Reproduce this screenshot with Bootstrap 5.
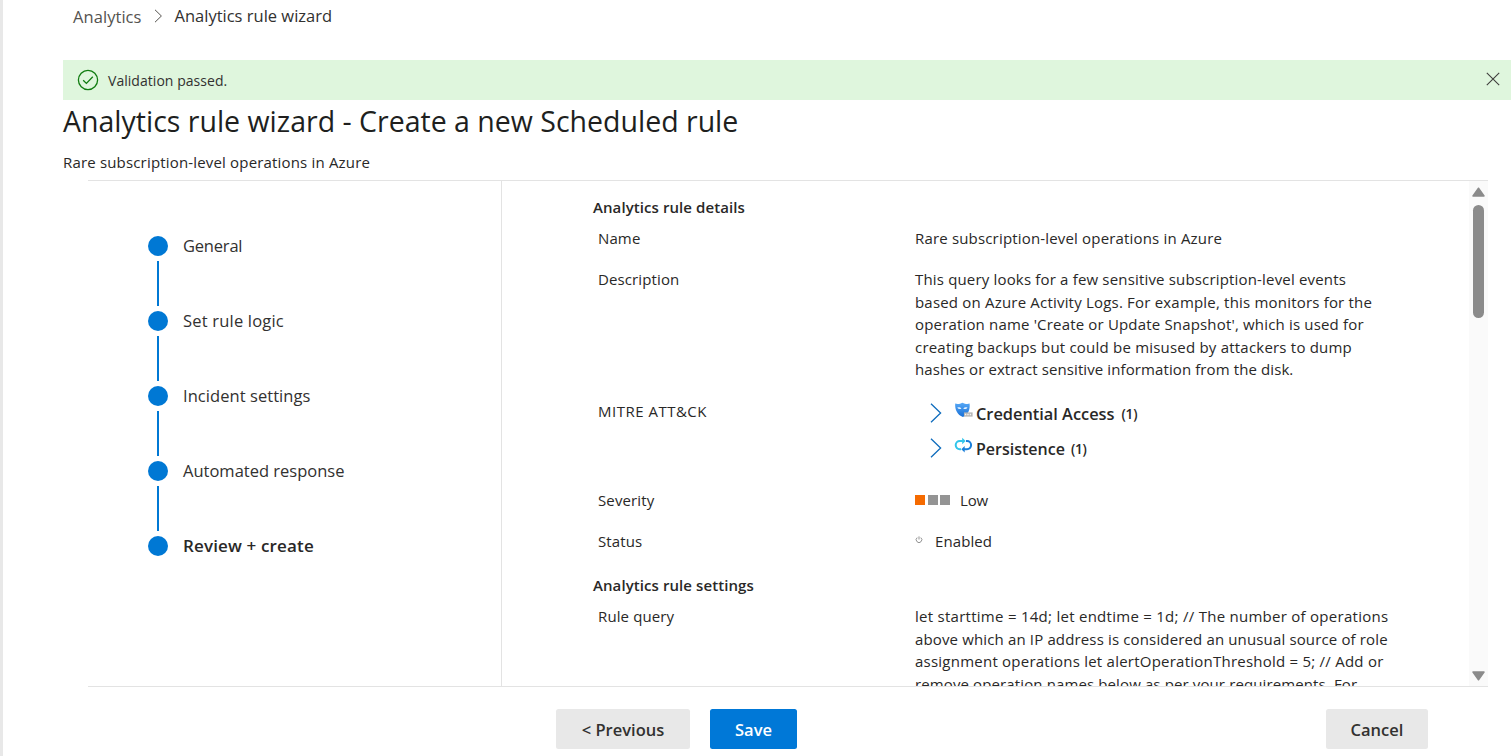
<!DOCTYPE html>
<html lang="en">
<head>
<meta charset="utf-8">
<meta name="viewport" content="width=device-width, initial-scale=1">
<title>Analytics rule wizard</title>
<link href="https://cdn.jsdelivr.net/npm/bootstrap@5.3.0/dist/css/bootstrap.min.css" rel="stylesheet">
<style>
  body { font-family: "Open Sans", "Noto Sans", sans-serif; font-size: 15px; line-height: 22.5px; color: #292827; background: #fff; }
  svg { display: block; flex: none; }
  .page { height: 756px; border-left: 3px solid #e8e8e8; padding-left: 60px; }
  .crumbs { height: 60px; padding: 6px 0 0 10px; font-size: 16.5px; color: #323130; }
  .crumbs .parent { color: #55534f; letter-spacing: .06px; }
  .banner { height: 40px; background: #dff6dd; padding: 0 11px 0 14px; }
  .banner-text { font-size: 14px; letter-spacing: .04px; color: #323130; padding-top: 2px; }
  .title { font-size: 28.5px; line-height: 40px; height: 50px; padding-top: 1px; color: #201f1e; }
  .tracked { letter-spacing: .172px; }
  .subtitle { height: 30px; padding-top: 1px; }
  .frame { height: 507px; margin: 0 23px 0 25px; border-top: 1px solid #e3e3e3; border-bottom: 1px solid #e3e3e3; }
  .steps { width: 414px; border-right: 1px solid #e3e3e3; padding: 55px 0 0 60px; font-size: 16.5px; color: #323130; }
  .step { height: 20px; gap: 15px; }
  .dot { width: 20px; height: 20px; border-radius: 50%; background: #0078d4; }
  .link-bar { width: 2px; height: 45px; margin: 5px 0 5px 9px; background: #0078d4; }
  .current { font-size: 17px; font-weight: 600; letter-spacing: .15px; color: #292827; }
  .details { padding: 15px 0 0 91px; }
  .section-title { font-size: 15px; line-height: 22.5px; font-weight: 600; letter-spacing: .08px; margin-bottom: 8.5px; }
  .field { padding-left: 5px; margin-bottom: 18.5px; }
  .field-name { width: 317px; flex: none; letter-spacing: .12px; }
  .tactic { height: 35px; padding-left: 14.5px; font-weight: 600; font-size: 16.35px; }
  .tactic .chev { margin-top: -2px; }
  .tactic-icon { margin: -8px 3px 0 12.5px; }
  .tactic .count { font-size: 13.6px; letter-spacing: -.2px; margin-left: 7px; }
  .sev { width: 10px; height: 10px; background: #949494; }
  .sev.on { background: #f56a00; }
  .track { width: 19px; background: #fafafa; padding: 6px 0 5px; }
  .thumb { width: 11px; height: 113px; border-radius: 6px; background: #8b8b8b; margin-top: 8px; }
  .actions { margin: 22px 83px 0 493px; }
  .actions .btn { height: 40px; border: 0; border-radius: 2.5px; font-size: 16.5px; font-weight: 600; padding: 2px 0 0; background: #e8e8e8; color: #323130; }
  .actions .btn-save { background: #0078d7; color: #fff; }
</style>
</head>
<body class="overflow-hidden">
<div class="page d-flex flex-column">
  <nav class="crumbs d-flex align-items-start" aria-label="breadcrumb">
    <span class="parent">Analytics</span>
    <svg width="10" height="14" viewBox="0 0 10 14" style="margin:3px 11px 0 12px" fill="none" stroke="#55534f"><path d="M1 .8 7.4 7 1 13.2"/></svg>
    <span style="margin-top:-1px">Analytics rule wizard</span>
  </nav>

  <div class="banner d-flex align-items-center">
    <svg width="22" height="22" viewBox="0 0 22 22" fill="none" stroke="#107c10" stroke-width="1.3"><circle cx="11" cy="11" r="9.6"/><path d="m6.2 11.2 3.2 3.2 6.4-6.6"/></svg>
    <span class="banner-text" style="margin-left:9px">Validation passed.</span>
    <svg class="ms-auto" width="14" height="14" viewBox="0 0 14 14" style="margin-top:-3px" fill="none" stroke="#403f3d" stroke-width="1.1"><path d="m.8.8 12.4 12.4M13.2.8.8 13.2"/></svg>
  </div>

  <h1 class="title fw-normal m-0">Analytics rule wizard - Create a new Scheduled rule</h1>
  <div class="subtitle tracked">Rare subscription-level operations in Azure</div>

  <main class="frame d-flex flex-shrink-0">
    <div class="steps flex-shrink-0">
      <div class="step d-flex align-items-center"><span class="dot"></span><span style="letter-spacing:-.2px">General</span></div>
      <div class="link-bar"></div>
      <div class="step d-flex align-items-center"><span class="dot"></span><span style="letter-spacing:.2px">Set rule logic</span></div>
      <div class="link-bar"></div>
      <div class="step d-flex align-items-center"><span class="dot"></span><span style="letter-spacing:.06px">Incident settings</span></div>
      <div class="link-bar"></div>
      <div class="step d-flex align-items-center"><span class="dot"></span><span>Automated response</span></div>
      <div class="link-bar"></div>
      <div class="step d-flex align-items-center"><span class="dot"></span><span class="current">Review + create</span></div>
    </div>

    <section class="details flex-grow-1 overflow-hidden text-nowrap">
      <h2 class="section-title">Analytics rule details</h2>
      <div class="field d-flex"><div class="field-name">Name</div><div class="tracked">Rare subscription-level operations in Azure</div></div>
      <div class="field d-flex" style="margin-bottom:19.5px"><div class="field-name">Description</div>
        <div class="tracked">This query looks for a few sensitive subscription-level events<br><span style="letter-spacing:.195px">based on Azure Activity Logs. For example, this monitors for the</span><br>operation name 'Create or Update Snapshot', which is used for<br><span style="letter-spacing:.21px">creating backups but could be misused by attackers to dump</span><br><span style="letter-spacing:.1px">hashes or extract sensitive information from the disk.</span></div></div>
      <div class="field d-flex"><div class="field-name" style="letter-spacing:.5px">MITRE ATT&amp;CK</div>
        <div style="margin:-3.5px 0 4px">
          <div class="tactic d-flex align-items-center">
            <svg class="chev" width="12" height="20" viewBox="0 0 12 20" fill="none" stroke="#0f6cbd" stroke-width="1.3"><path d="m1 .8 9.6 9.2L1 19.2"/></svg>
            <svg class="tactic-icon" width="19" height="18" viewBox="0 0 19 18">
              <defs><linearGradient id="mask" x2="0" y2="1"><stop stop-color="#57a8f6"/><stop offset="1" stop-color="#176fd6"/></linearGradient></defs>
              <path fill="url(#mask)" d="M1.2 2.6C4 3.5 6.1 2.7 8.4 1.7c2.5 1 4.6 1.8 7.2.9.7 5.8-1.4 11.4-6.7 13.5C3.5 14 .7 9 1.2 2.6Z"/>
              <path fill="#e4f2ff" d="M3.3 6.5c1.7-.5 3.2-.2 4.1 1.2-1.6.7-3.2.4-4.1-1.2Zm6 1.2c.9-1.4 2.5-1.7 4.2-1.2-.9 1.7-2.5 1.9-4.2 1.2Z"/>
              <path fill="#b4b4b4" d="M10 11.4h8.6v4.2H10z"/><path stroke="#f4f4f4" stroke-width="1.3" stroke-dasharray="1.4 1" d="M10.9 13.5h7"/>
            </svg>
            <span>Credential Access</span><span class="count">(1)</span>
          </div>
          <div class="tactic d-flex align-items-center">
            <svg class="chev" width="12" height="20" viewBox="0 0 12 20" fill="none" stroke="#0f6cbd" stroke-width="1.3"><path d="m1 .8 9.6 9.2L1 19.2"/></svg>
            <svg class="tactic-icon" width="19" height="16" viewBox="0 0 19 16" fill="none" stroke-width="2">
              <path stroke="#32c5ea" d="M7 12.2H5.8a4.1 4.1 0 0 1 0-8.2h3"/><path fill="#32c5ea" d="M8.2.8 11.6 4 8.2 7.2Z"/>
              <path stroke="#1b7fda" d="M12 4h1a4.1 4.1 0 0 1 0 8.2h-3"/><path fill="#1b7fda" d="M10.7 9 7.3 12.2l3.4 3.2Z"/>
            </svg>
            <span style="font-size:16px">Persistence</span><span class="count" style="margin-left:6px">(1)</span>
          </div>
        </div></div>
      <div class="field d-flex"><div class="field-name">Severity</div>
        <div class="d-flex align-items-center"><span class="sev on"></span><span class="sev" style="margin:0 2.5px"></span><span class="sev"></span><span style="margin-left:10px;letter-spacing:-.2px">Low</span></div></div>
      <div class="field d-flex" style="margin-bottom:21.5px"><div class="field-name">Status</div>
        <div class="d-flex align-items-center">
          <svg width="8" height="8" viewBox="0 0 8 8" style="margin-top:-2px" fill="none" stroke="#929292"><path d="M2.2 1.6a2.8 2.8 0 1 0 3.6 0M4 .4v3.1"/></svg>
          <span style="margin-left:12px;letter-spacing:.1px">Enabled</span></div></div>
      <h2 class="section-title">Analytics rule settings</h2>
      <div class="field d-flex"><div class="field-name">Rule query</div>
        <div class="tracked"><span style="letter-spacing:.27px">let starttime = 14d; let endtime = 1d; // The number of operations</span><br><span style="letter-spacing:.145px">above which an IP address is considered an unusual source of role</span><br><span style="letter-spacing:.235px">assignment operations let alertOperationThreshold = 5; // Add or</span><br><span style="letter-spacing:.12px">remove operation names below as per your requirements. For</span></div></div>
    </section>

    <div class="track d-flex flex-column align-items-center flex-shrink-0">
      <svg width="13" height="10" viewBox="0 0 13 10"><path fill="#8b8b8b" stroke="#8b8b8b" stroke-width="1.5" stroke-linejoin="round" d="M6.5 1.2 12 9H1Z"/></svg>
      <div class="thumb"></div>
      <svg class="mt-auto" width="13" height="10" viewBox="0 0 13 10"><path fill="#8b8b8b" stroke="#8b8b8b" stroke-width="1.5" stroke-linejoin="round" d="M6.5 8.8 12 1H1Z"/></svg>
    </div>
  </main>

  <footer class="actions d-flex">
    <button class="btn" style="width:134px">&lt; Previous</button>
    <button class="btn btn-save" style="width:87px;margin-left:20px">Save</button>
    <button class="btn ms-auto" style="width:102px">Cancel</button>
  </footer>
</div>
<script src="https://cdn.jsdelivr.net/npm/bootstrap@5.3.0/dist/js/bootstrap.bundle.min.js"></script>
</body>
</html>
